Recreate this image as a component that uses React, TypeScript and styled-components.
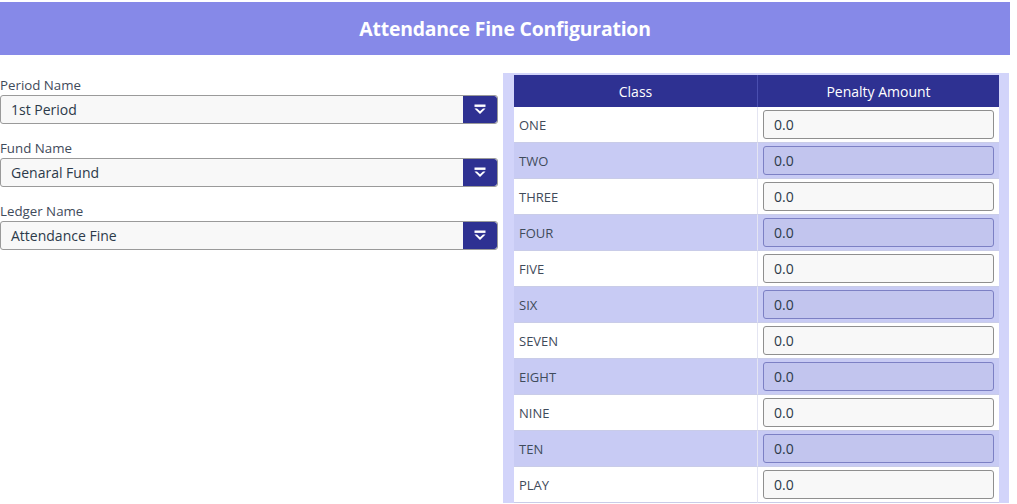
import React from "react";
import styled, { createGlobalStyle } from "styled-components";

const Global = createGlobalStyle`
  html, body { margin: 0; padding: 0; background: #ffffff; }
  body { font-family: "Open Sans", "Noto Sans", sans-serif; }
  * { box-sizing: border-box; }
`;

const Page = styled.div`
  width: 1017px;
  height: 504px;
  overflow: hidden;
  padding-top: 2px;
`;

const Header = styled.div`
  width: 1010px;
  height: 53px;
  background: #8689e8;
  color: #ffffff;
  font-weight: 700;
  font-size: 19.4px;
  display: flex;
  align-items: center;
  justify-content: center;
  letter-spacing: -0.2px;
`;

const Body = styled.div`
  display: grid;
  grid-template-columns: 498px 506px;
  column-gap: 5px;
  padding-top: 18px;
`;

const Left = styled.div`
  display: flex;
  flex-direction: column;
  gap: 15px;
  padding-top: 3px;
`;

const Field = styled.div`
  display: flex;
  flex-direction: column;
`;

const Label = styled.label`
  font-size: 13.3px;
  color: #3f4b5b;
  line-height: 18px;
  height: 19px;
`;

const Select = styled.div`
  display: flex;
  height: 29px;
  border: 1px solid #9a9a9a;
  border-radius: 3px;
  background: #f8f8f8;
  overflow: hidden;
`;

const SelectText = styled.div`
  flex: 1;
  font-size: 14px;
  color: #2c3a4a;
  display: flex;
  align-items: center;
  padding-left: 10px;
`;

const SelectButton = styled.div`
  width: 34px;
  background: #2e3192;
  display: flex;
  align-items: center;
  justify-content: center;
  border-radius: 0 3px 3px 0;
`;

const Panel = styled.div`
  background: #d2d4fa;
  padding: 2px 10px 0 11px;
`;

const Table = styled.div`
  display: grid;
  grid-template-columns: 243px 242px;
`;

const HeadCell = styled.div<{ $first?: boolean }>`
  height: 32px;
  background: #2e3192;
  color: #ffffff;
  font-size: 14px;
  display: flex;
  align-items: center;
  justify-content: center;
  border-left: ${(p) => (p.$first ? "none" : "1px solid #4a4fb0")};
`;

const Cell = styled.div<{ $alt: boolean; $first?: boolean }>`
  height: 36px;
  background: ${(p) => (p.$alt ? "#c8cbf4" : "#ffffff")};
  border-bottom: 1px solid #c9cce8;
  border-left: ${(p) => (p.$first ? "none" : "1px solid #e4e5f2")};
  display: flex;
  align-items: center;
  font-size: 13px;
  color: #3f4b5b;
  padding: 0 5px;
`;

const AmountInput = styled.div<{ $alt: boolean }>`
  width: 100%;
  height: 29px;
  border: 1px solid ${(p) => (p.$alt ? "#7c80c4" : "#8f8f8f")};
  background: ${(p) => (p.$alt ? "#c2c5ee" : "#f8f8f8")};
  border-radius: 3px;
  font-size: 14px;
  color: #2c3a4a;
  display: flex;
  align-items: center;
  padding-left: 10px;
`;

const Icon = () => (
  <svg width="12" height="11" viewBox="0 0 12 11">
    <rect x="0.5" y="0.5" width="11" height="2.4" fill="#ffffff" />
    <path d="M0.5 4.5 L6 10 L11.5 4.5 L9 4.5 L6 7.2 L3 4.5 Z" fill="#ffffff" />
  </svg>
);

const fields = [
  { label: "Period Name", value: "1st Period" },
  { label: "Fund Name", value: "Genaral Fund" },
  { label: "Ledger Name", value: "Attendance Fine" },
];

const classes = ["ONE", "TWO", "THREE", "FOUR", "FIVE", "SIX", "SEVEN", "EIGHT", "NINE", "TEN", "PLAY"];

export default function App() {
  return (
    <Page>
      <Global />
      <Header>Attendance Fine Configuration</Header>
      <Body>
        <Left>
          {fields.map((f) => (
            <Field key={f.label}>
              <Label>{f.label}</Label>
              <Select>
                <SelectText>{f.value}</SelectText>
                <SelectButton>
                  <Icon />
                </SelectButton>
              </Select>
            </Field>
          ))}
        </Left>
        <Panel>
          <Table>
            <HeadCell $first>Class</HeadCell>
            <HeadCell>Penalty Amount</HeadCell>
            {classes.map((c, i) => (
              <React.Fragment key={c}>
                <Cell $alt={i % 2 === 1} $first>
                  {c}
                </Cell>
                <Cell $alt={i % 2 === 1}>
                  <AmountInput $alt={i % 2 === 1}>0.0</AmountInput>
                </Cell>
              </React.Fragment>
            ))}
          </Table>
        </Panel>
      </Body>
    </Page>
  );
}
